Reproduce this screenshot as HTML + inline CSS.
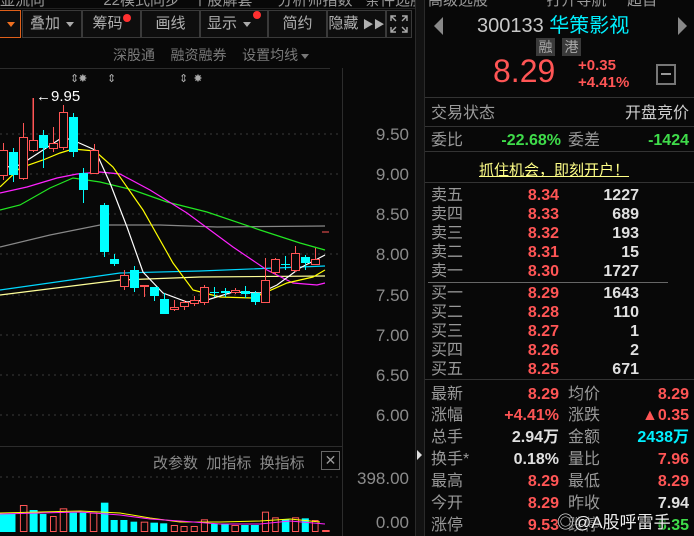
<!DOCTYPE html>
<html><head><meta charset="utf-8"><style>
*{margin:0;padding:0;box-sizing:border-box}
body{width:694px;height:536px;background:#080808;overflow:hidden;position:relative;font-family:"Liberation Sans","Noto Sans CJK SC",sans-serif;color:#a8a8a8}
.a{position:absolute;white-space:nowrap}
.btn{position:absolute;top:10px;height:28px;border:1px solid #3a3a3a;background:#0e0e0e;color:#b0b0b0;font-size:15px;line-height:26px;text-align:center}
.dot{display:inline-block;width:8px;height:8px;border-radius:4px;background:#ff3030;vertical-align:top;margin-top:3px}
.tri{display:inline-block;border-left:4px solid transparent;border-right:4px solid transparent;border-top:5px solid #aaa;vertical-align:middle;margin-left:6px}
.ax{position:absolute;right:285px;font-size:17px;color:#8c8c8c}
.r{color:#ff5555}.g{color:#3fdc4a}.w{color:#e0e0e0}.c{color:#00f0ff}
.row{position:absolute;left:431px;width:258px;height:19px;font-size:16px;line-height:19px}
.row span{position:absolute}
.b{font-weight:bold}
</style></head><body>
<div class="a" style="top:-11px;left:0;font-size:15px;color:#999;width:420px">显流向&nbsp;&nbsp;&nbsp;&nbsp;&nbsp;&nbsp;&nbsp;&nbsp;&nbsp;&nbsp;&nbsp;&nbsp;&nbsp;&nbsp;22模式同步&nbsp;&nbsp;&nbsp;个股解套&nbsp;&nbsp;&nbsp;&nbsp;&nbsp;&nbsp;分析师指数&nbsp;&nbsp;&nbsp;条件选股</div>
<div class="a" style="top:-11px;left:428px;font-size:15px;color:#999">高级选股&nbsp;&nbsp;&nbsp;&nbsp;&nbsp;&nbsp;&nbsp;&nbsp;&nbsp;&nbsp;&nbsp;&nbsp;&nbsp;&nbsp;打开导航&nbsp;&nbsp;&nbsp;&nbsp;&nbsp;超自</div>
<div style="position:absolute;left:0;top:8px;width:415px;height:1px;background:#222"></div>
<div class="btn" style="left:-2px;width:23px;border-color:#e0601a"><span class="tri" style="border-top-color:#f07020;margin-left:2px"></span></div>
<div class="btn" style="left:22px;width:60px">叠加<span class="tri"></span></div>
<div class="btn" style="left:82px;width:59px">筹码<span class="dot"></span></div>
<div class="btn" style="left:141px;width:59px">画线</div>
<div class="btn" style="left:200px;width:68px">显示<span class="tri"></span><span class="dot" style="margin-left:2px;margin-top:0"></span></div>
<div class="btn" style="left:268px;width:59px">简约</div>
<div class="btn" style="left:327px;width:59px">隐藏 <span style="font-size:11px">▶▶</span></div>
<div class="btn" style="left:386px;width:26px;font-size:14px">
<svg width="20" height="20" viewBox="0 0 20 20" style="margin-top:3px" stroke="#aaa" fill="none" stroke-width="1.4"><path d="M2 7V2h5M2 2l5 5M18 7V2h-5M18 2l-5 5M2 13v5h5M2 18l5-5M18 13v5h-5M18 18l-5-5"/></svg></div>
<div class="a" style="top:45px;left:113px;font-size:14px;color:#7a7a7a">深股通&nbsp;&nbsp;&nbsp;&nbsp;融资融券&nbsp;&nbsp;&nbsp;&nbsp;设置均线<span class="tri" style="border-top-color:#777;margin-left:3px"></span></div>
<div style="position:absolute;left:0;top:68px;width:330px;height:1px;background:#2c2c2c"></div>
<div class="a" style="top:72px;left:70px;font-size:11px;color:#aaa;letter-spacing:-1px">⇕✸&nbsp;&nbsp;&nbsp;&nbsp;&nbsp;&nbsp;&nbsp;&nbsp;&nbsp;&nbsp;⇕&nbsp;&nbsp;&nbsp;&nbsp;&nbsp;&nbsp;&nbsp;&nbsp;&nbsp;&nbsp;&nbsp;&nbsp;&nbsp;&nbsp;&nbsp;&nbsp;&nbsp;&nbsp;&nbsp;&nbsp;&nbsp;&nbsp;&nbsp;&nbsp;&nbsp;&nbsp;&nbsp;&nbsp;&nbsp;&nbsp;&nbsp;⇕&nbsp;&nbsp;&nbsp;✸</div>
<div class="a" style="top:88px;left:36px;font-size:15px;color:#fff">←9.95</div>
<div style="position:absolute;left:342px;top:68px;width:1px;height:468px;background:#2c2c2c"></div>
<div style="position:absolute;left:0;top:446px;width:342px;height:1px;background:#2c2c2c"></div>
<div style="position:absolute;left:415px;top:0;width:10px;height:536px;background:#121212;border-left:1px solid #2a2a2a;border-right:1px solid #2a2a2a"></div>
<div class="a" style="left:417px;top:450px;width:0;height:0;border-top:5px solid transparent;border-bottom:5px solid transparent;border-left:5px solid #ddd"></div>
<div class="ax" style="top:125px">9.50</div>
<div class="ax" style="top:165px">9.00</div>
<div class="ax" style="top:205px">8.50</div>
<div class="ax" style="top:245px">8.00</div>
<div class="ax" style="top:286px">7.50</div>
<div class="ax" style="top:326px">7.00</div>
<div class="ax" style="top:366px">6.50</div>
<div class="ax" style="top:406px">6.00</div>
<div class="ax" style="top:469px">398.00</div>
<div class="ax" style="top:513px">0.00</div>
<div class="a" style="top:452px;left:153px;font-size:15px;color:#8a8a8a">改参数&nbsp;&nbsp;加指标&nbsp;&nbsp;换指标</div>
<div class="a" style="top:451px;left:321px;width:19px;height:19px;border:1px solid #666;color:#999;font-size:14px;line-height:17px;text-align:center">✕</div>
<svg class="a" style="left:0;top:0" width="342" height="536">
<g stroke="#3a3a3a" stroke-dasharray="2,4">
<line x1="0" y1="134" x2="342" y2="134"/><line x1="0" y1="174" x2="342" y2="174"/><line x1="0" y1="214" x2="342" y2="214"/><line x1="0" y1="254" x2="342" y2="254"/><line x1="0" y1="295" x2="342" y2="295"/><line x1="0" y1="335" x2="342" y2="335"/><line x1="0" y1="375" x2="342" y2="375"/><line x1="0" y1="415" x2="342" y2="415"/><line x1="0" y1="477" x2="342" y2="477"/>
</g>
<line x1="33" y1="98" x2="33" y2="150" stroke="#ff5555"/>
<g stroke-width="1.2" fill="none">
<polyline stroke="#888" points="0,247 50,235 100,225 160,225 217,227 325,226"/>
<polyline stroke="#00d8ff" points="0,290 120,273 200,271 325,266"/>
<polyline stroke="#ffff99" points="0,295 120,280 200,277 325,276"/>
<polyline stroke="#22e622" points="0,210 20,205 50,188 73,178 100,182 133,190 167,202 207,212 260,230 300,243 325,250"/>
<polyline stroke="#ff22ff" points="0,193 27,187 57,178 77,174 100,172 120,174 150,190 187,213 233,247 267,270 293,283 317,285 325,283"/>
<polyline stroke="#ffff00" points="0,187 20,168 43,160 60,153 73,149 95,151 113,167 143,210 173,263 193,290 220,297 253,298 287,283 313,277 325,270"/>
<polyline stroke="#ffffff" points="0,168 20,165 40,152 63,137 77,142 95,150 110,183 127,227 143,272 163,293 187,302 207,300 233,292 260,293 277,285 300,268 325,255"/>
</g>
<line x1="322" y1="232" x2="329" y2="232" stroke="#ff5555"/>
<g id="k"></g>
<g id="v"></g>
</svg>
<script>
var k=[[3,150,175,'r',143,180],[13,152,175,'c',148,182],[23,137,178,'r',123,180],[33,140,150,'r',98,152],[43,135,148,'c',130,168],[53,143,148,'r',127,152],[63,112,147,'r',105,150],[73,117,152,'c',113,157],[83,173,190,'c',168,203],[94,150,173,'r',144,174],[104,205,252,'c',203,257],[114,259,264,'c',254,266],[124,275,286,'r',270,290],[134,270,288,'c',266,292],[144,285,286,'r',285,297],[154,287,296,'c',287,301],[164,299,314,'c',293,314],[174,307,309,'r',300,311],[184,302,306,'r',300,310],[194,300,303,'r',296,306],[204,287,302,'r',285,305],[214,292,293,'c',287,297],[225,291,293,'c',288,297],[235,290,292,'r',288,294],[245,291,294,'c',286,298],[255,293,302,'c',291,305],[265,280,302,'r',258,302],[275,259,272,'r',258,275],[285,264,265,'c',256,270],[295,253,270,'r',246,272],[305,257,263,'c',255,270],[315,259,264,'r',248,265]];
var s='';k.forEach(function(c){var col=c[3]=='r'?'#ff5555':'#00ffff';s+='<line x1="'+(c[0]+.5)+'" y1="'+c[4]+'" x2="'+(c[0]+.5)+'" y2="'+c[5]+'" stroke="'+col+'"/>';var h=Math.max(1,c[2]-c[1]);if(c[3]=='r')s+='<rect x="'+(c[0]-3.5)+'" y="'+(c[1]+.5)+'" width="8" height="'+h+'" fill="#080808" stroke="#ff5555"/>';else s+='<rect x="'+(c[0]-4)+'" y="'+c[1]+'" width="9" height="'+h+'" fill="#00ffff"/>';});
document.getElementById('k').innerHTML=s;
var v=[[0,35,'c',222],[45,62,'r',195],[67,85,'c',210],[90,105,'c',222],[113,128,'r',228],[135,152,'r',205],[157,174,'c',218],[180,195,'c',218],[203,220,'r',218],[228,245,'c',188],[250,266,'c',240],[272,288,'c',240],[295,310,'c',245],[318,335,'r',245],[340,357,'c',248],[362,378,'c',250],[386,402,'r',255],[408,424,'r',258],[431,447,'r',258],[454,470,'r',238],[477,492,'c',252],[500,517,'c',252],[523,540,'r',255],[545,562,'c',255],[567,585,'c',255],[592,608,'r',215],[615,630,'r',232],[637,654,'c',238],[660,676,'r',232],[682,698,'c',235],[705,720,'r',240],[728,745,'r',270]];
var t='';v.forEach(function(b){var x=b[0]/2.26,w=(b[1]-b[0])/2.26,y=440+b[3]/3,h=532-y;if(b[2]=='c')t+='<rect x="'+x+'" y="'+y+'" width="'+w+'" height="'+h+'" fill="#00ffff"/>';else t+='<rect x="'+(x+.5)+'" y="'+(y+.5)+'" width="'+(w-1)+'" height="'+(h-1)+'" fill="none" stroke="#ff5555"/>';});
t+='<polyline fill="none" stroke="#ffff00" points="0,513 40,512 80,511 120,513 150,518 180,522 220,522 260,521 290,519 320,522"/>';
t+='<polyline fill="none" stroke="#ff22ff" points="0,514 40,513 80,512 120,515 150,519 180,521 220,524 260,524 290,521 325,524"/>';
document.getElementById('v').innerHTML=t;
</script>
<div class="a" style="left:434px;top:17px;width:0;height:0;border-top:9px solid transparent;border-bottom:9px solid transparent;border-right:9px solid #888"></div>
<div class="a" style="left:678px;top:17px;width:0;height:0;border-top:9px solid transparent;border-bottom:9px solid transparent;border-left:9px solid #888"></div>
<div class="a" style="left:477px;top:9px;font-size:20px;color:#c8c8c8">300133 <span class="c">华策影视</span></div>
<div class="a" style="left:536px;top:38px;width:19px;height:18px;background:#3a3a3a;color:#aaa;font-size:14px;line-height:18px;text-align:center">融</div>
<div class="a" style="left:562px;top:38px;width:19px;height:18px;background:#3a3a3a;color:#aaa;font-size:14px;line-height:18px;text-align:center">港</div>
<div class="a r" style="left:493px;top:53px;font-size:32px">8.29</div>
<div class="a r b" style="left:578px;top:57px;font-size:15px;line-height:17px">+0.35<br>+4.41%</div>
<div class="a" style="left:656px;top:64px;width:20px;height:21px;border:2px solid #777"><div style="margin:7px 3px;height:2px;background:#999"></div></div>
<div class="a" style="left:425px;top:97px;width:269px;height:1px;background:#333"></div>
<div class="row" style="top:104px"><span style="left:0;color:#999">交易状态</span><span style="right:0;color:#ccc">开盘竞价</span></div>
<div class="a" style="left:425px;top:126px;width:269px;height:1px;background:#333"></div>
<div class="row" style="top:131px"><span style="left:0;color:#999">委比</span><span class="g b" style="right:128px">-22.68%</span><span style="left:137px;color:#999">委差</span><span class="g b" style="right:0">-1424</span></div>
<div class="a" style="left:425px;top:151px;width:269px;height:1px;background:#333"></div>
<div class="a" style="left:479px;top:159px;font-size:15px;color:#ffff88;text-decoration:underline">抓住机会，即刻开户！</div>
<div class="a" style="left:425px;top:182px;width:269px;height:1px;background:#333"></div>
<div class="row" style="top:186px"><span style="left:0;color:#999">卖五</span><span class="r b" style="right:130px">8.34</span><span class="w b" style="right:50px">1227</span></div>
<div class="row" style="top:205px"><span style="left:0;color:#999">卖四</span><span class="r b" style="right:130px">8.33</span><span class="w b" style="right:50px">689</span></div>
<div class="row" style="top:224px"><span style="left:0;color:#999">卖三</span><span class="r b" style="right:130px">8.32</span><span class="w b" style="right:50px">193</span></div>
<div class="row" style="top:243px"><span style="left:0;color:#999">卖二</span><span class="r b" style="right:130px">8.31</span><span class="w b" style="right:50px">15</span></div>
<div class="row" style="top:262px"><span style="left:0;color:#999">卖一</span><span class="r b" style="right:130px">8.30</span><span class="w b" style="right:50px">1727</span></div>
<div class="a" style="left:428px;top:282px;width:240px;height:1px;background:#666"></div>
<div class="row" style="top:284px"><span style="left:0;color:#999">买一</span><span class="r b" style="right:130px">8.29</span><span class="w b" style="right:50px">1643</span></div>
<div class="row" style="top:303px"><span style="left:0;color:#999">买二</span><span class="r b" style="right:130px">8.28</span><span class="w b" style="right:50px">110</span></div>
<div class="row" style="top:322px"><span style="left:0;color:#999">买三</span><span class="r b" style="right:130px">8.27</span><span class="w b" style="right:50px">1</span></div>
<div class="row" style="top:341px"><span style="left:0;color:#999">买四</span><span class="r b" style="right:130px">8.26</span><span class="w b" style="right:50px">2</span></div>
<div class="row" style="top:360px"><span style="left:0;color:#999">买五</span><span class="r b" style="right:130px">8.25</span><span class="w b" style="right:50px">671</span></div>
<div class="a" style="left:425px;top:379px;width:269px;height:1px;background:#333"></div>
<div class="row" style="top:385px"><span style="left:0;color:#999">最新</span><span class="r b" style="right:130px">8.29</span><span style="left:137px;color:#999">均价</span><span class="r b" style="right:0">8.29</span></div>
<div class="row" style="top:406px"><span style="left:0;color:#999">涨幅</span><span class="r b" style="right:130px">+4.41%</span><span style="left:137px;color:#999">涨跌</span><span class="r b" style="right:0">▲0.35</span></div>
<div class="row" style="top:428px"><span style="left:0;color:#999">总手</span><span class="w b" style="right:130px">2.94万</span><span style="left:137px;color:#999">金额</span><span class="c b" style="right:0">2438万</span></div>
<div class="row" style="top:450px"><span style="left:0;color:#999">换手*</span><span class="w b" style="right:130px">0.18%</span><span style="left:137px;color:#999">量比</span><span class="r b" style="right:0">7.96</span></div>
<div class="row" style="top:472px"><span style="left:0;color:#999">最高</span><span class="r b" style="right:130px">8.29</span><span style="left:137px;color:#999">最低</span><span class="r b" style="right:0">8.29</span></div>
<div class="row" style="top:494px"><span style="left:0;color:#999">今开</span><span class="r b" style="right:130px">8.29</span><span style="left:137px;color:#999">昨收</span><span class="w b" style="right:0">7.94</span></div>
<div class="row" style="top:516px"><span style="left:0;color:#999">涨停</span><span class="r b" style="right:130px">9.53</span><span style="left:137px;color:#999">跌停</span><span class="g b" style="right:0">6.35</span></div>
<div class="a" style="left:557px;top:508px;font-size:17px;color:#eee;text-shadow:0 0 2px #000,0 0 2px #000">◎@A股呼雷手</div>
</body></html>
